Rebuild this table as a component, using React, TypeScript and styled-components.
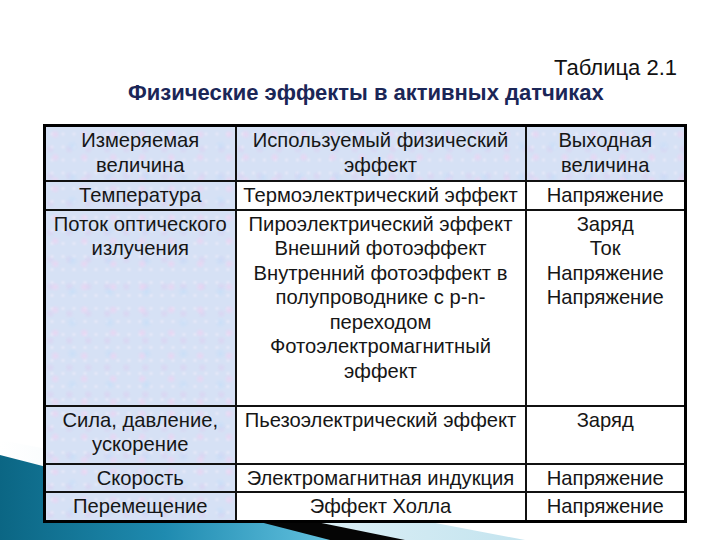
import React from "react"
import styled, { createGlobalStyle } from "styled-components"

const GlobalStyle = createGlobalStyle`
  html, body {
    margin: 0;
    padding: 0;
    background: #ffffff;
  }
  body {
    font-family: "Liberation Sans", Arial, sans-serif;
  }
`

// Slide

const Slide = styled.div`
  position: relative;
  width: 720px;
  height: 540px;
  overflow: hidden;
  background: #ffffff;
`

const Decor = styled.svg`
  position: absolute;
  left: 0;
  top: 0;
  width: 720px;
  height: 540px;
`

const Content = styled.section`
  position: relative;
  display: flex;
  flex-direction: column;
  padding: 55px 36px 0 43px;
`

const TableNumber = styled.div`
  align-self: flex-end;
  padding-right: 7px;
  font-size: 22px;
  line-height: 26px;
  color: #111111;
`

const Heading = styled.h1`
  margin: 0 0 19px 85px;
  font-size: 22px;
  line-height: 24px;
  font-weight: bold;
  color: #1b2657;
`

// Table

const Grid = styled.table`
  border-collapse: collapse;
  border: 3px solid #000000;
  table-layout: fixed;
  width: 641px;
  background: #ffffff;
`

const Row = styled.tr<{ $h: number }>`
  height: ${(p) => p.$h}px;
`

const Cell = styled.td<{ $shaded?: boolean }>`
  border: 2px solid #111111;
  padding: 1px 2px;
  vertical-align: top;
  text-align: center;
  font-size: 20.2px;
  line-height: 24.5px;
  color: #161616;
  background-color: ${(p) => (p.$shaded ? "#d6e1f5" : "#ffffff")};
  background-image: ${(p) =>
    p.$shaded
      ? `radial-gradient(circle at 30% 30%, rgba(236, 212, 242, 0.8), transparent 5px),
         radial-gradient(circle at 70% 60%, rgba(198, 222, 248, 0.7), transparent 6px),
         radial-gradient(circle at 50% 50%, rgba(242, 236, 250, 0.5), transparent 3px),
         radial-gradient(circle at 20% 80%, rgba(220, 206, 240, 0.6), transparent 5px)`
      : "none"};
  background-size: 29px 23px, 37px 31px, 11px 13px, 19px 27px;
`

const Line = styled.div`
  white-space: nowrap;
`

type RowData = { h: number; cells: string[][] }

const header: string[][] = [
  ["Измеряемая", "величина"],
  ["Используемый физический", "эффект"],
  ["Выходная", "величина"],
]

const rows: RowData[] = [
  {
    h: 29,
    cells: [["Температура"], ["Термоэлектрический эффект"], ["Напряжение"]],
  },
  {
    h: 196,
    cells: [
      ["Поток оптического", "излучения"],
      [
        "Пироэлектрический эффект",
        "Внешний фотоэффект",
        "Внутренний фотоэффект в",
        "полупроводнике с p-n-",
        "переходом",
        "Фотоэлектромагнитный",
        "эффект",
      ],
      ["Заряд", "Ток", "Напряжение", "Напряжение"],
    ],
  },
  {
    h: 58,
    cells: [
      ["Сила, давление,", "ускорение"],
      ["Пьезоэлектрический эффект"],
      ["Заряд"],
    ],
  },
  {
    h: 27,
    cells: [["Скорость"], ["Электромагнитная индукция"], ["Напряжение"]],
  },
  {
    h: 29,
    cells: [["Перемещение"], ["Эффект Холла"], ["Напряжение"]],
  },
]

function Lines({ lines }: { lines: string[] }) {
  return (
    <>
      {lines.map((l, i) => (
        <Line key={i}>{l}</Line>
      ))}
    </>
  )
}

function SensorTable() {
  return (
    <Grid>
      <colgroup>
        <col style={{ width: 191 }} />
        <col style={{ width: 290 }} />
        <col style={{ width: 160 }} />
      </colgroup>
      <tbody>
        <Row $h={55}>
          {header.map((c, i) => (
            <Cell key={i} $shaded>
              <Lines lines={c} />
            </Cell>
          ))}
        </Row>
        {rows.map((r, i) => (
          <Row key={i} $h={r.h}>
            {r.cells.map((c, j) => (
              <Cell key={j} $shaded={j === 0}>
                <Lines lines={c} />
              </Cell>
            ))}
          </Row>
        ))}
      </tbody>
    </Grid>
  )
}

function CornerArt() {
  return (
    <Decor viewBox="0 0 720 540">
      <defs>
        <linearGradient id="light" x1="0" y1="0" x2="1" y2="0">
          <stop offset="0" stopColor="#ffffff" />
          <stop offset="1" stopColor="#c4e4ef" />
        </linearGradient>
        <linearGradient id="teal" x1="0" y1="0" x2="1" y2="0">
          <stop offset="0" stopColor="#0b6684" />
          <stop offset="0.5" stopColor="#1f8bb0" />
          <stop offset="1" stopColor="#62c1df" />
        </linearGradient>
      </defs>
      <polygon points="0,440 525,540 0,540" fill="url(#light)" />
      <polygon points="100,478 405,540 100,540" fill="#050505" />
      <polygon points="0,455 330,540 0,540" fill="url(#teal)" />
    </Decor>
  )
}

export default function App() {
  return (
    <>
      <GlobalStyle />
      <Slide>
        <CornerArt />
        <Content>
          <TableNumber>Таблица 2.1</TableNumber>
          <Heading>Физические эффекты в активных датчиках</Heading>
          <SensorTable />
        </Content>
      </Slide>
    </>
  )
}
